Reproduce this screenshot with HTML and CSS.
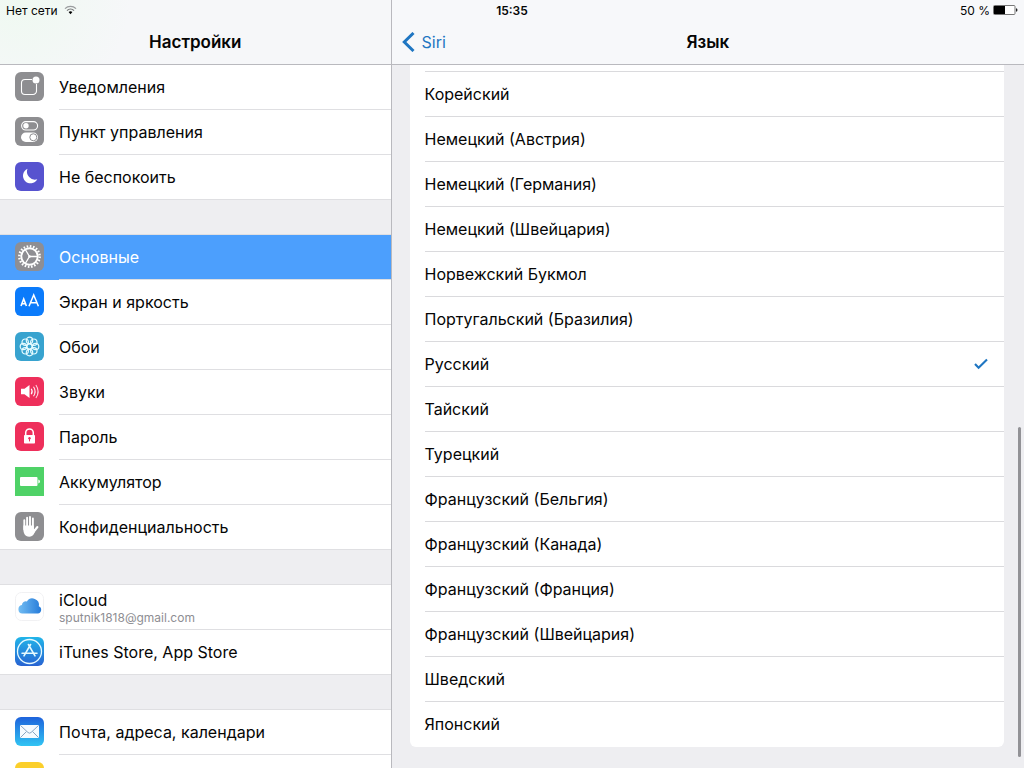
FILE: index.html
```html
<!DOCTYPE html>
<html lang="ru">
<head>
<meta charset="utf-8">
<meta name="viewport" content="width=device-width, initial-scale=1">
<title>Настройки</title>
<link rel="stylesheet" href="styles.css">
</head>
<body>
<div class="app">
  <div class="status">
    <div class="status-left">Нет сети
      <svg width="13" height="10" viewBox="0 0 13 10" fill="none" stroke-width="1.3">
        <path d="M1 3.6a8 8 0 0 1 11 0" stroke="#9a9c9e"/><path d="M3 5.6a5 5 0 0 1 7 0" stroke="#77797b"/><path d="M6.500 9.200 4.600 7.100a2.800 2.800 0 0 1 3.800 0z" fill="#000"/>
      </svg>
    </div>
    <time class="clock">15:35</time>
    <div class="status-right">50 %
      <svg width="25" height="10" viewBox="0 0 25 10">
        <rect x=".5" y=".5" width="21.500" height="9" rx="1" fill="#fff" stroke="#777"/><rect x="1" y="1" width="11" height="8" fill="#000"/><path d="M23 3.200q1.500 .3 1.500 1.800t-1.500 1.800z" fill="#222"/>
      </svg>
    </div>
  </div>

  <aside class="sidebar">
    <header class="bar tinted"><h1 class="title">Настройки</h1></header>
    <nav class="groups">
      <div class="group">
        <a class="item" href="#notifications">
          <svg class="icon" viewBox="0 0 29 29"><rect width="29" height="29" rx="6" fill="#8e8e91"/><path d="M17 7.500H10a3.500 3.500 0 0 0-3.500 3.500v8A3.500 3.500 0 0 0 10 22.500h8a3.500 3.500 0 0 0 3.500-3.500v-7" fill="none" stroke="#fff" stroke-width="1.100"/><circle cx="21" cy="8" r="3.500" fill="#fff"/></svg>
          <span class="label">Уведомления</span></a>
        <a class="item" href="#control">
          <svg class="icon" viewBox="0 0 29 29"><rect width="29" height="29" rx="6" fill="#8e8e91"/><rect x="6.600" y="4.600" width="16" height="8.400" rx="4.200" fill="none" stroke="#fff" stroke-width="1.100"/><circle cx="11" cy="8.800" r="2.700" fill="#fff"/><rect x="6" y="15.500" width="17" height="9.500" rx="4.750" fill="#fff"/><circle cx="18.300" cy="20.250" r="3.500" fill="#fff" stroke="#8e8e91"/></svg>
          <span class="label">Пункт управления</span></a>
        <a class="item" href="#dnd">
          <svg class="icon" viewBox="0 0 29 29"><rect width="29" height="29" rx="6" fill="#5753cf"/><path d="M12.500 6.800A7.600 7.600 0 1 0 22.300 17.300 8 8 0 0 1 12.500 6.800z" fill="#fff"/></svg>
          <span class="label">Не беспокоить</span></a>
      </div>

      <div class="group">
        <a class="item selected" href="#general" aria-current="page">
          <svg class="icon" viewBox="0 0 29 29"><rect width="29" height="29" rx="6" fill="#8e8e93"/><g fill="none" stroke="#fff"><circle cx="14.500" cy="14.500" r="10.200" stroke-width="2.400" stroke-dasharray="1.600 1.604"/><circle cx="14.500" cy="14.500" r="8.200" stroke-width="1.900"/><path d="M14.500 14.500h8M14.500 14.500l-4.200-7M14.500 14.500l-4.200 7" stroke-width="1.300"/></g><circle cx="14.500" cy="14.500" r="1.300" fill="#fff"/></svg>
          <span class="label">Основные</span></a>
        <a class="item" href="#display">
          <svg class="icon" viewBox="0 0 29 29"><rect width="29" height="29" rx="6" fill="#0b7bfb"/><path d="M6 19l2.700-7 2.700 7M7 16.800h3.400" fill="none" stroke="#fff" stroke-width="1.600"/><path d="M14 19.300l4.700-11.300 4.700 11.300M15.800 15.800h5.800" fill="none" stroke="#fff" stroke-width="1.500"/></svg>
          <span class="label">Экран и яркость</span></a>
        <a class="item" href="#wallpaper">
          <svg class="icon" viewBox="0 0 29 29"><rect width="29" height="29" rx="6" fill="#38a3cf"/><g fill="none" stroke="#e4fbff" stroke-width="1.200"><circle cx="14.500" cy="8.400" r="3.200"/><circle cx="18.800" cy="10.200" r="3.200"/><circle cx="20.600" cy="14.500" r="3.200"/><circle cx="18.800" cy="18.800" r="3.200"/><circle cx="14.500" cy="20.600" r="3.200"/><circle cx="10.200" cy="18.800" r="3.200"/><circle cx="8.400" cy="14.500" r="3.200"/><circle cx="10.200" cy="10.200" r="3.200"/><circle cx="14.500" cy="14.500" r="2.600"/></g></svg>
          <span class="label">Обои</span></a>
        <a class="item" href="#sounds">
          <svg class="icon" viewBox="0 0 29 29"><rect width="29" height="29" rx="6" fill="#ee2f5b"/><path d="M6 11.800h3.500l5-3.800v13l-5-3.800H6z" fill="#fff"/><g fill="none" stroke="#fff" stroke-width="1.100"><path d="M16.200 11.700q2 2.800 0 5.600"/><path d="M18.500 9.800q3.200 4.700 0 9.400" opacity=".9"/><path d="M20.900 8q4.400 6.500 0 13" opacity=".8"/></g></svg>
          <span class="label">Звуки</span></a>
        <a class="item" href="#passcode">
          <svg class="icon" viewBox="0 0 29 29"><rect width="29" height="29" rx="6" fill="#ee2f5b"/><path d="M10.700 14v-3.300a3.800 3.800 0 0 1 7.600 0V14" fill="none" stroke="#fff" stroke-width="1.500"/><rect x="9" y="13" width="11" height="8.500" rx=".8" fill="#fff"/><circle cx="14.500" cy="16.200" r="1.200" fill="#ee2f5b"/><path d="M14.500 16v3.400" stroke="#ee2f5b"/></svg>
          <span class="label">Пароль</span></a>
        <a class="item" href="#battery">
          <svg class="icon" viewBox="0 0 29 29"><rect width="29" height="29" fill="#4fd267"/><rect x="5" y="10" width="17.500" height="9" rx="1" fill="#fff"/><path d="M23.300 12.500q1.700 .5 1.700 2t-1.700 2z" fill="#fff"/></svg>
          <span class="label">Аккумулятор</span></a>
        <a class="item" href="#privacy">
          <svg class="icon" viewBox="0 0 29 29"><rect width="29" height="29" rx="6" fill="#8e8e91"/><g fill="none" stroke="#fff" stroke-width="1.900" stroke-linecap="round"><path d="M9.300 8.200v9M12.100 5.700v11M15 4.900v11M17.900 6.500v11"/><path d="M18.500 20l3.900-5" stroke-width="2.100"/></g><path d="M8.350 13.500h10.500v4l1.600-.8c-.4 4-2 8-6.200 8-4.600 0-5.900-4-5.900-8z" fill="#fff"/></svg>
          <span class="label">Конфиденциальность</span></a>
      </div>

      <div class="group">
        <a class="item" href="#icloud">
          <svg class="icon" viewBox="0 0 29 29"><defs><linearGradient id="cloud" x1="0" x2="1"><stop stop-color="#72bdf3"/><stop offset="1" stop-color="#267bd9"/></linearGradient></defs><rect x=".5" y=".5" width="28" height="28" rx="6" fill="#fff" stroke="#f1f1f3"/><path d="M7.300 21.500a4.300 4.300 0 0 1-.4-8.500 3.900 3.900 0 0 1 5-3.500 6.500 6.500 0 0 1 11.900 4.700 3.800 3.800 0 0 1-1 7.300z" fill="url(#cloud)"/></svg>
          <span class="label stacked">iCloud<small class="account">sputnik1818@gmail.com</small></span></a>
        <a class="item" href="#store">
          <svg class="icon" viewBox="0 0 29 29"><defs><linearGradient id="store" x2="0" y2="1"><stop stop-color="#21b5e9"/><stop offset="1" stop-color="#2863d2"/></linearGradient></defs><rect width="29" height="29" rx="6" fill="url(#store)"/><g fill="none" stroke="#e6faff" stroke-linecap="round"><circle cx="14.500" cy="14.500" r="12" stroke-width="1.300"/><path d="M15.600 7.500L9 18.900M13.400 7.500L20 18.900" stroke-width="1.600"/><path d="M7 16.300h15" stroke-width="1.500"/></g></svg>
          <span class="label">iTunes Store, App Store</span></a>
      </div>

      <div class="group">
        <a class="item" href="#mail">
          <svg class="icon" viewBox="0 0 29 29"><defs><linearGradient id="mail" x2="0" y2="1"><stop stop-color="#1e63dc"/><stop offset="1" stop-color="#31c4f3"/></linearGradient></defs><rect width="29" height="29" rx="6" fill="url(#mail)"/><rect x="5" y="8" width="19" height="13" rx="1" fill="#f6fbff"/><path d="M5.500 8.500l7.500 7q1.500 1.300 3 0l7.500-7M5.500 20.500l6-6M23.500 20.500l-6-6" fill="none" stroke="#7d9cbc" stroke-width=".9"/></svg>
          <span class="label">Почта, адреса, календари</span></a>
        <a class="item" href="#notes">
          <svg class="icon" viewBox="0 0 29 29"><rect width="29" height="29" rx="6" fill="#fbcf2b"/></svg>
          <span class="label"></span></a>
      </div>
    </nav>
  </aside>

  <main class="detail">
    <header class="bar">
      <a class="back" href="#siri"><svg width="13" height="20" viewBox="0 0 13 20" fill="none" stroke="#1f76c2" stroke-width="3"><path d="M11.500 1L2.300 10l9.200 9"/></svg>Siri</a>
      <h2 class="title">Язык</h2>
    </header>
    <form class="scroll">
      <div class="languages">
        <div class="previous"></div>
        <label class="choice">Корейский<input type="radio" name="lang"></label>
        <label class="choice">Немецкий (Австрия)<input type="radio" name="lang"></label>
        <label class="choice">Немецкий (Германия)<input type="radio" name="lang"></label>
        <label class="choice">Немецкий (Швейцария)<input type="radio" name="lang"></label>
        <label class="choice">Норвежский Букмол<input type="radio" name="lang"></label>
        <label class="choice">Португальский (Бразилия)<input type="radio" name="lang"></label>
        <label class="choice">Русский<input type="radio" name="lang" checked><svg class="tick" width="14" height="12" viewBox="0 0 14 12" fill="none" stroke="#1f76c2" stroke-width="2.100"><path d="M1 6l3.600 3.800L13 1.500"/></svg></label>
        <label class="choice">Тайский<input type="radio" name="lang"></label>
        <label class="choice">Турецкий<input type="radio" name="lang"></label>
        <label class="choice">Французский (Бельгия)<input type="radio" name="lang"></label>
        <label class="choice">Французский (Канада)<input type="radio" name="lang"></label>
        <label class="choice">Французский (Франция)<input type="radio" name="lang"></label>
        <label class="choice">Французский (Швейцария)<input type="radio" name="lang"></label>
        <label class="choice">Шведский<input type="radio" name="lang"></label>
        <label class="choice">Японский<input type="radio" name="lang"></label>
      </div>
    </form>
    <div class="thumb"></div>
  </main>
</div>
</body>
</html>
```

FILE: styles.css
```css
* { box-sizing: border-box; }

body {
  margin: 0;
  font-family: Inter, "Liberation Sans", sans-serif;
  font-size: 16px;
  color: #050505;
  background: #eeeef1;
}

a { color: inherit; text-decoration: none; }

.app {
  display: grid;
  grid-template-columns: 39fr 63fr;
  grid-template-rows: 20px 1fr;
  height: 100vh;
  overflow: hidden;
}

.status {
  grid-column: 1 / -1;
  grid-row: 1;
  z-index: 1;
  display: grid;
  grid-template-columns: 1fr auto 1fr;
  align-items: center;
  padding: 0 6px;
  font-size: 12px;
}

.status-left,
.status-right {
  display: flex;
  align-items: center;
  gap: 6px;
}

.status-right { justify-content: flex-end; gap: 3px; }

.clock { font-weight: 600; }

.sidebar,
.detail {
  grid-row: 1 / -1;
  display: flex;
  flex-direction: column;
  min-width: 0;
  min-height: 0;
}

.sidebar {
  grid-column: 1;
  border-right: 1px solid #b9b9be;
}

.detail {
  grid-column: 2;
  position: relative;
}

.bar {
  display: grid;
  grid-template-columns: 1fr auto 1fr;
  align-items: center;
  flex: none;
  height: 65px;
  padding-top: 20px;
  border-bottom: 1px solid #b9b9be;
  background: #f7f8fa;
}

.tinted { background: radial-gradient(circle at 20px 0, #eff9f1, #f6f7f9 110px); }

.title {
  grid-column: 2;
  margin: 0;
  font-size: 17px;
  font-weight: 600;
}

.back {
  grid-column: 1;
  display: flex;
  align-items: center;
  gap: 7px;
  padding-left: 10px;
  color: #1f76c2;
}

.groups {
  display: flex;
  flex-direction: column;
  gap: 35px;
  min-height: 0;
  overflow: hidden;
}

.group {
  flex: none;
  background: #fff;
  box-shadow: 0 -1px #dfdfe2;
}

.item {
  display: flex;
  align-items: center;
  height: 45px;
  padding-left: 15px;
  gap: 15px;
}

.icon {
  flex: none;
  width: 29px;
  height: 29px;
  margin-bottom: 2px;
}

.label {
  display: flex;
  flex: 1;
  align-items: center;
  align-self: stretch;
  border-bottom: 1px solid #dfdfe2;
}

.item:last-child { border-bottom: 1px solid #dfdfe2; }
.item:last-child .label { border-bottom: 0; }

.stacked {
  flex-direction: column;
  align-items: flex-start;
  justify-content: center;
  padding-top: 2px;
  line-height: 20px;
}

.account {
  font-size: 12px;
  line-height: 16px;
  color: #8e8e93;
}

.selected {
  color: #fff;
  background: #4c9ffd;
}

.scroll {
  min-height: 0;
  padding: 0 20px 0 18px;
  overflow: hidden;
}

.languages {
  overflow: hidden;
  padding-left: 15px;
  border-radius: 0 0 6px 6px;
  background: #fff;
}

.previous {
  height: 7px;
  border-bottom: 1px solid #dadadd;
}

.choice {
  display: flex;
  align-items: center;
  justify-content: space-between;
  height: 45px;
  padding-right: 16px;
  border-bottom: 1px solid #dadadd;
}

.choice:last-child { border-bottom-color: transparent; }

.choice input {
  appearance: none;
  width: 0;
  height: 0;
  margin: 0;
}

.tick { display: none; }
input:checked + .tick { display: block; }

.thumb {
  position: absolute;
  right: 3px;
  bottom: 11px;
  width: 3px;
  height: 43%;
  border-radius: 2px;
  background: #929296;
}
```
